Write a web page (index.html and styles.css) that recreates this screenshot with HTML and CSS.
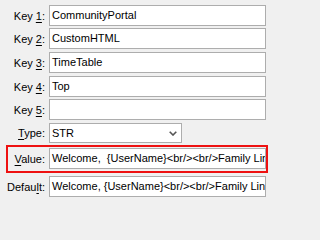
FILE: index.html
```html
<!DOCTYPE html>
<html>
<head>
<meta charset="utf-8">
<link rel="stylesheet" href="styles.css">
</head>
<body>
<div class="form">
  <div class="row r1"><span class="label">Key <u>1</u>:</span><div class="field">CommunityPortal</div></div>
  <div class="row r2"><span class="label">Key <u>2</u>:</span><div class="field">CustomHTML</div></div>
  <div class="row r3"><span class="label">Key <u>3</u>:</span><div class="field">TimeTable</div></div>
  <div class="row r4"><span class="label">Key <u>4</u>:</span><div class="field">Top</div></div>
  <div class="row r5"><span class="label">Key <u>5</u>:</span><div class="field"></div></div>
  <div class="row rtype"><span class="label"><u>T</u>ype:</span>
    <div class="select"><span>STR</span>
      <svg class="chev" width="8" height="5" viewBox="0 0 8 5"><polyline points="0.7,0.7 4,4 7.3,0.7" fill="none" stroke="#555" stroke-width="1.6"/></svg>
    </div>
  </div>
  <div class="hl">
    <div class="row"><span class="label"><u>V</u>alue:</span><div class="field">Welcome,&nbsp; {UserName}&lt;br/&gt;&lt;br/&gt;Family Links</div></div>
  </div>
  <div class="row rdef"><span class="label">Defau<u>l</u>t:</span><div class="field">Welcome, {UserName}&lt;br/&gt;&lt;br/&gt;Family Links</div></div>
</div>
</body>
</html>
```
FILE: styles.css
```css
html, body {
  margin: 0;
  padding: 0;
  background: #f0f0f0;
  overflow: hidden;
}
body {
  width: 271px;
  height: 202px;
  font-family: "Liberation Sans", Arial, sans-serif;
  font-size: 11px;
  color: #000;
}
.form {
  display: flex;
  flex-direction: column;
  padding-top: 5px;
}
.row {
  display: flex;
  align-items: center;
  height: 21px;
}
.r1 { margin-bottom: 2px; }
.r2 { margin-bottom: 3px; }
.r3 { margin-bottom: 3px; }
.r4 { margin-bottom: 2px; }
.r5 { margin-bottom: 3px; }
.rtype { height: 20px; margin-bottom: 2px; }
.label {
  width: 45px;
  flex: none;
  text-align: right;
  white-space: nowrap;
  margin-right: 4px;
}
.label u {
  text-underline-offset: 2px;
}
.field {
  width: 217px;
  height: 21px;
  box-sizing: border-box;
  border: 1px solid #adadad;
  background: #fff;
  padding-left: 2px;
  line-height: 19px;
  white-space: pre;
  overflow: hidden;
  flex: none;
}
.select {
  width: 133px;
  height: 20px;
  box-sizing: border-box;
  border: 1px solid #adadad;
  background: #fff;
  padding-left: 2px;
  padding-right: 4px;
  line-height: 18px;
  display: flex;
  align-items: center;
  justify-content: space-between;
  flex: none;
}
.chev {
  display: block;
  margin-top: 1px;
}
.hl {
  margin-left: 6px;
  width: 262px;
  box-sizing: border-box;
  border: 2px solid #ee1111;
  padding-top: 1px;
  padding-bottom: 2px;
  margin-bottom: 3px;
}
.hl .label {
  width: 37px;
}
```
